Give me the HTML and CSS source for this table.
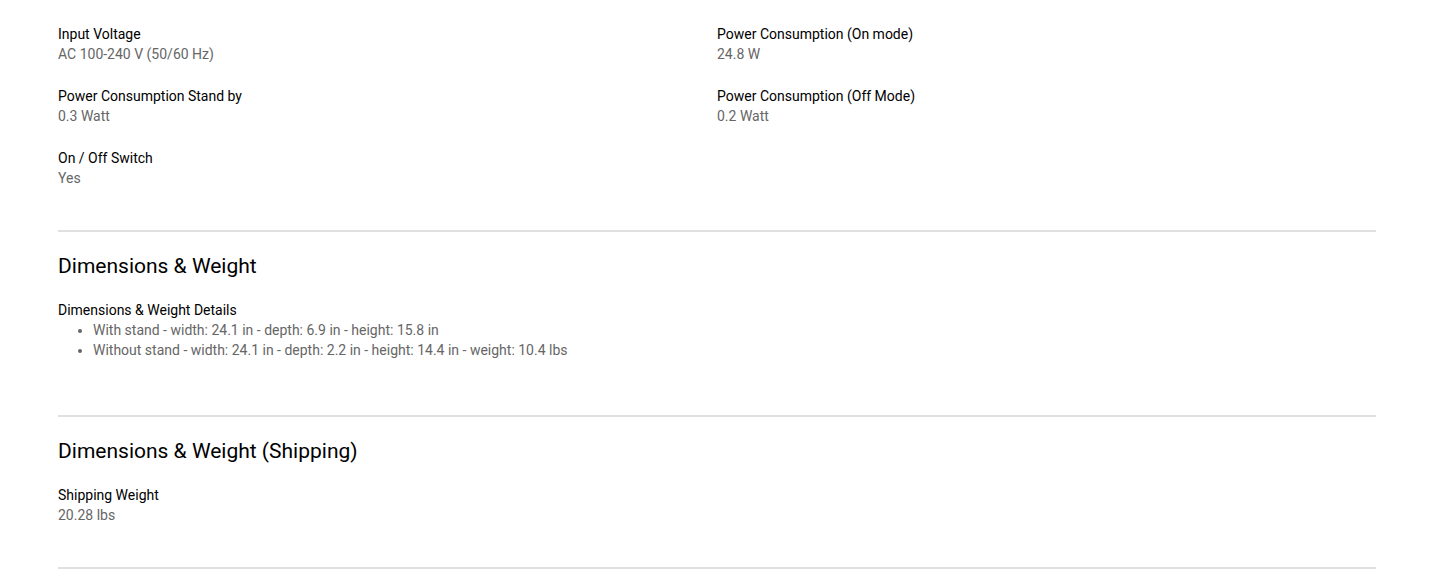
FILE: index.html
```html
<!DOCTYPE html>
<html lang="en">
<head>
  <meta charset="UTF-8" />
  <meta name="viewport" content="width=device-width, initial-scale=1.0"/>
  <title>Specifications</title>
  <link rel="stylesheet" href="styles.css">
</head>
<body>

  <div class="specs">

    <section class="spec-section first">
      <div class="spec-grid">
        <div class="spec-item">
          <div class="spec-label">Input Voltage</div>
          <div class="spec-value">AC 100-240 V (50/60 Hz)</div>
        </div>
        <div class="spec-item">
          <div class="spec-label">Power Consumption (On mode)</div>
          <div class="spec-value">24.8 W</div>
        </div>
        <div class="spec-item">
          <div class="spec-label">Power Consumption Stand by</div>
          <div class="spec-value">0.3 Watt</div>
        </div>
        <div class="spec-item">
          <div class="spec-label">Power Consumption (Off Mode)</div>
          <div class="spec-value">0.2 Watt</div>
        </div>
        <div class="spec-item">
          <div class="spec-label">On / Off Switch</div>
          <div class="spec-value">Yes</div>
        </div>
      </div>
    </section>

    <section class="spec-section">
      <h2>Dimensions &amp; Weight</h2>
      <div class="spec-item">
        <div class="spec-label">Dimensions &amp; Weight Details</div>
        <ul class="spec-list">
          <li>With stand - width: 24.1 in - depth: 6.9 in - height: 15.8 in</li>
          <li>Without stand - width: 24.1 in - depth: 2.2 in - height: 14.4 in - weight: 10.4 lbs</li>
        </ul>
      </div>
    </section>

    <section class="spec-section">
      <h2>Dimensions &amp; Weight (Shipping)</h2>
      <div class="spec-grid">
        <div class="spec-item">
          <div class="spec-label">Shipping Weight</div>
          <div class="spec-value">20.28 lbs</div>
        </div>
      </div>
    </section>

  </div>

</body>
</html>
```

FILE: styles.css
```css
* {
  box-sizing: border-box;
}

body {
  margin: 0;
  padding: 0;
  font-family: Roboto, "Liberation Sans", Arial, sans-serif;
  font-size: 14px;
  line-height: 20px;
  color: #000;
  background: #fff;
}

.specs {
  margin: 0 54px 0 58px;
}

.spec-section {
  padding: 20px 0 42px;
  border-bottom: 2px solid #e0e0e0;
}

.spec-section.first {
  padding-top: 24px;
}

.spec-section h2 {
  margin: 0 0 20px;
  font-size: 21px;
  font-weight: 400;
  line-height: 28px;
  color: #000;
}

.spec-grid {
  display: grid;
  grid-template-columns: 1fr 1fr;
  row-gap: 22px;
}

.spec-label {
  color: #000;
}

.spec-value {
  color: #666;
}

.spec-list {
  margin: 0 0 13px;
  padding-left: 35px;
  color: #666;
}
```
